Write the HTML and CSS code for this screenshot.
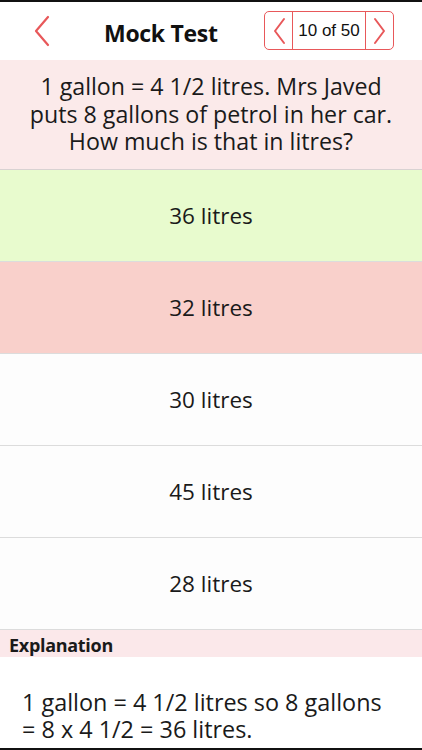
FILE: index.html
```html
<!DOCTYPE html>
<html lang="en">
<head>
    <meta charset="UTF-8">
    <meta name="viewport" content="width=device-width, initial-scale=1.0">
    <title>Mock Test</title>
    <link rel="stylesheet" href="styles.css">
</head>
<body>
    <div class="screen">
        <header class="top-bar">
            <a href="#" class="back-btn" aria-label="Back">
                <svg width="18" height="32" viewBox="0 0 18 32">
                    <polyline points="15,2 3,16 15,30" fill="none" stroke="#e8585a" stroke-width="2.2" stroke-linecap="round" stroke-linejoin="round"/>
                </svg>
            </a>
            <h1 class="title">Mock Test</h1>
            <div class="pager">
                <button class="pager-btn" aria-label="Previous">
                    <svg width="14" height="28" viewBox="0 0 14 28">
                        <polyline points="12,2 3,14 12,26" fill="none" stroke="#e8585a" stroke-width="2" stroke-linecap="round" stroke-linejoin="round"/>
                    </svg>
                </button>
                <span class="pager-count">10 of 50</span>
                <button class="pager-btn" aria-label="Next">
                    <svg width="14" height="28" viewBox="0 0 14 28">
                        <polyline points="2,2 11,14 2,26" fill="none" stroke="#e8585a" stroke-width="2" stroke-linecap="round" stroke-linejoin="round"/>
                    </svg>
                </button>
            </div>
        </header>

        <div class="question">
            1 gallon = 4 1/2 litres. Mrs Javed<br>
            puts 8 gallons of petrol in her car.<br>
            How much is that in litres?
        </div>

        <ul class="answers">
            <li class="answer correct">36 litres</li>
            <li class="answer wrong">32 litres</li>
            <li class="answer">30 litres</li>
            <li class="answer">45 litres</li>
            <li class="answer">28 litres</li>
        </ul>

        <div class="explain-head">Explanation</div>
        <div class="explain-text">
            1 gallon = 4 1/2 litres so 8 gallons<br>= 8 x 4 1/2 = 36 litres.
        </div>
    </div>
</body>
</html>
```

FILE: styles.css
```css
body {
    margin: 0;
    background-color: #111;
    font-family: 'Open Sans', 'Noto Sans', sans-serif;
    color: #1a1a1a;
}
.screen {
    width: 422px;
    height: 746px;
    margin-top: 2px;
    background-color: #fff;
    display: flex;
    flex-direction: column;
    overflow: hidden;
}
.top-bar {
    height: 58px;
    display: flex;
    align-items: center;
    flex-shrink: 0;
}
.back-btn {
    display: flex;
    margin-left: 33px;
}
.title {
    margin: 3px 0 0 53px;
    font-size: 23px;
    font-weight: bold;
    letter-spacing: -0.3px;
    color: #111;
}
.pager {
    margin-left: auto;
    margin-right: 28px;
    display: flex;
    height: 37px;
    border: 1.5px solid #e8585a;
    border-radius: 5px;
    margin-top: -1px;
}
.pager-btn {
    width: 27px;
    padding: 0;
    border: none;
    background: none;
    display: flex;
    align-items: center;
    justify-content: center;
}
.pager-count {
    width: 72px;
    display: flex;
    align-items: center;
    justify-content: center;
    border-left: 1.5px solid #e8585a;
    border-right: 1.5px solid #e8585a;
    font-family: 'Liberation Sans', Arial, sans-serif;
    font-size: 17px;
    color: #111;
}
.question {
    height: 110px;
    box-sizing: border-box;
    padding: 13px 0 0;
    background-color: #fbeaea;
    border-bottom: 1px solid #d8d2d2;
    text-align: center;
    font-size: 23.2px;
    line-height: 27.5px;
    flex-shrink: 0;
    white-space: nowrap;
}
.answers {
    list-style: none;
    margin: 0;
    padding: 0;
}
.answer {
    height: 92px;
    box-sizing: border-box;
    display: flex;
    align-items: center;
    justify-content: center;
    border-bottom: 1px solid #dcdcdc;
    background-color: #fdfdfd;
    font-size: 22.5px;
}
.answer.correct {
    background-color: #e8fbce;
}
.answer.wrong {
    background-color: #f9d0cb;
}
.explain-head {
    height: 27px;
    box-sizing: border-box;
    padding: 5px 9px 0;
    background-color: #fbe8ea;
    font-size: 18px;
    font-weight: bold;
    line-height: 20px;
    letter-spacing: -0.3px;
}
.explain-text {
    padding: 32px 22px 0;
    font-size: 23.4px;
    line-height: 27px;
    white-space: nowrap;
}
```
